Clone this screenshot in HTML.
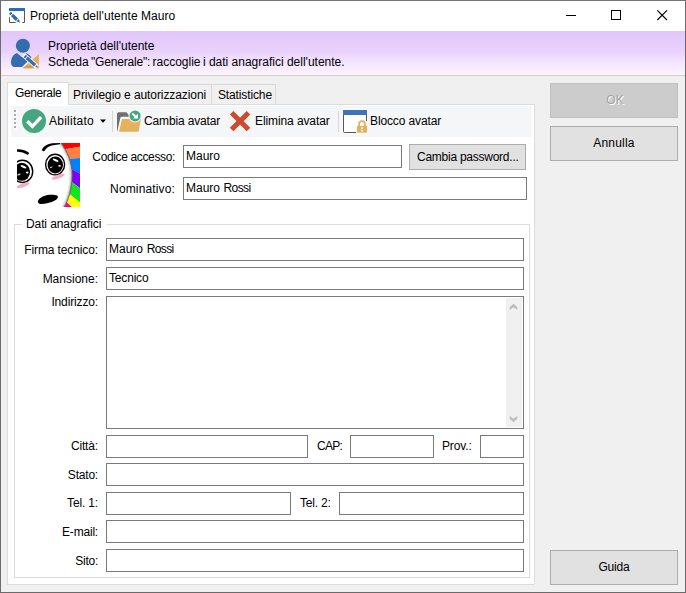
<!DOCTYPE html>
<html><head><meta charset="utf-8">
<style>
html,body{margin:0;padding:0;}
body{width:686px;height:593px;overflow:hidden;background:#f0f0f0;font-family:"Liberation Sans",sans-serif;font-size:12px;color:#000;position:relative;}
.a{position:absolute;}
.t{position:absolute;white-space:pre;line-height:16px;height:16px;}
.r{text-align:right;}
.in{position:absolute;box-sizing:border-box;border:1px solid #7a7a7a;background:#fff;height:23px;}
.btn{position:absolute;box-sizing:border-box;border:1px solid #adadad;background:#e1e1e1;text-align:center;}
</style></head><body>
<!-- window frame -->
<div class="a" style="left:0;top:0;width:686px;height:593px;box-sizing:border-box;border:1px solid #6b6b6b;border-top-color:#747474;"></div>
<!-- title bar -->
<div class="a" style="left:1px;top:1px;width:684px;height:30px;background:#fff;"></div>
<svg class="a" style="left:9px;top:8px" width="16" height="16" viewBox="0 0 16 16">
<rect x="0" y="0" width="16" height="3" fill="#2e6db4"/>
<path d="M0.500 9.300V14.500H6.700M13.300 14.500H15.500V3" fill="none" stroke="#585858" stroke-width="1"/>
<path d="M2 5.800L2.100 5.900" stroke="#2e6db4" stroke-width="3.200" stroke-linecap="round"/>
<path d="M0.800 8.200L4.400 4.600" stroke="#fff" stroke-width="0.900"/>
<path d="M3.300 7.100L7.900 11.700" stroke="#2e6db4" stroke-width="3.400"/>
<path d="M7.300 13.300L9.700 10.900L11.200 14.800Z" fill="#2e6db4"/>
</svg>
<div class="t" style="left:30px;top:8px;letter-spacing:0.06px;">Proprietà dell'utente Mauro</div>
<svg class="a" style="left:560px;top:5px" width="120" height="22" viewBox="0 0 120 22">
<path d="M6 10.5H16" stroke="#000" stroke-width="1"/>
<rect x="51.5" y="5.5" width="9" height="9" fill="none" stroke="#000" stroke-width="1"/>
<path d="M97.3 5.3L107 15M107 5.3L97.3 15" stroke="#000" stroke-width="1.1"/>
</svg>
<!-- banner -->
<div class="a" style="left:1px;top:31px;width:684px;height:44px;background:linear-gradient(#e2c6fc 0%,#e8d1fc 45%,#f5e6fd 75%,#fdf4fe 100%);"></div>
<div class="a" style="left:1px;top:75px;width:684px;height:1px;background:#cfcfc1;"></div>
<svg class="a" style="left:10px;top:38px" width="32" height="32" viewBox="0 0 32 32">
<circle cx="12.900" cy="7.700" r="7.050" fill="#336db0"/>
<path d="M6.800 15C3 16.500 1 20.500 1 24.500C1 27.500 2.500 28.900 4.500 28.900H12L21.500 19.500C20.500 17.500 18.500 16 16.500 15.200L12.500 19.600Z" fill="#336db0"/>
<path d="M12.200 30.500L28.900 15.900V30.500Z" fill="#e8ae5a"/>
<path d="M16 29.400V28.400M18 29.400V28.400M20 29.400V27.800M22 29.400V28.400M24 29.400V28.400" stroke="#8a6a3a" stroke-width="0.800"/>
<path d="M13.900 17.200L27.200 29.100" stroke="#fff" stroke-width="4.800"/>
<path d="M14.700 17.900L25.100 27.200" stroke="#336db0" stroke-width="3.300" stroke-dasharray="1.900 0.800 20 0"/>
<path d="M25.200 28.700L27.800 29.600L26.900 27Z" fill="#336db0"/>
</svg>
<div class="t" style="left:48px;top:38px;">Proprietà dell'utente</div>
<div class="t" style="left:48px;top:54px;"><span style="word-spacing:-1px">Scheda <span style="letter-spacing:-0.19px">"Generale":</span> raccoglie </span>i dati anagrafici dell'utente.</div>

<!-- tabs -->
<div class="a" style="left:68px;top:84px;width:208px;height:21px;box-sizing:border-box;border:1px solid #d9d9d9;border-bottom:none;background:#f0f0f0;"></div>
<div class="a" style="left:211px;top:85px;width:1px;height:19px;background:#d9d9d9;"></div>
<!-- tab panel -->
<div class="a" style="left:7px;top:104px;width:528px;height:481px;box-sizing:border-box;border:1px solid #dcdcdc;background:#fff;"></div>
<div class="a" style="left:7px;top:82px;width:62px;height:23px;box-sizing:border-box;border:1px solid #dcdcdc;border-bottom:none;background:#fff;"></div>
<div class="t" style="left:15px;top:85px;letter-spacing:-0.4px;">Generale</div>
<div class="t" style="left:73px;top:87px;letter-spacing:-0.085px;">Privilegio e autorizzazioni</div>
<div class="t" style="left:218px;top:87px;letter-spacing:-0.13px;">Statistiche</div>

<!-- toolbar -->
<div class="a" style="left:11px;top:106px;width:521px;height:31px;background:#f5f6f7;"></div>
<svg class="a" style="left:13px;top:108px" width="360" height="28" viewBox="0 0 360 28">
<g fill="#fff"><rect x="2" y="3" width="2" height="2"/><rect x="2" y="7" width="2" height="2"/><rect x="2" y="11" width="2" height="2"/><rect x="2" y="15" width="2" height="2"/><rect x="2" y="19" width="2" height="2"/></g>
<g fill="#a9a9a9"><rect x="1" y="2" width="2" height="2"/><rect x="1" y="6" width="2" height="2"/><rect x="1" y="10" width="2" height="2"/><rect x="1" y="14" width="2" height="2"/><rect x="1" y="18" width="2" height="2"/></g>
<circle cx="21" cy="13" r="12" fill="#47a680"/>
<path d="M14.300 13.300L19.400 18.300L28.100 9.200" fill="none" stroke="#fff" stroke-width="3.400"/>
<path d="M87 11.500H93L90 14.800Z" fill="#000"/>
<rect x="99" y="3" width="1" height="21" fill="#d6d6d6"/>
<!-- folder -->
<path d="M104 23.200V5.700Q104 4.200 105.500 4.200H113.500L116 7.500V8.800H108.800Q107.600 8.800 107.300 10L104.300 23.200Z" fill="#6f6f6f"/>
<path d="M109 11H127.900L125.600 23.700H106Z" fill="#e8b25d"/>
<circle cx="122.070" cy="7.950" r="6.500" fill="#f5f6f7"/>
<circle cx="122.070" cy="7.950" r="5.500" fill="#47a680"/>
<path d="M119.300 5.400L123.200 9.300" stroke="#fff" stroke-width="2"/>
<path d="M125 5.700V10.600H120.100Z" fill="#fff"/>
<!-- red x -->
<path d="M218.600 4.700L235.500 21.500M235.500 4.700L218.600 21.500" stroke="#cb4a30" stroke-width="5"/>
<rect x="325" y="3" width="1" height="21" fill="#d6d6d6"/>
<!-- window lock -->
<rect x="329" y="1" width="26" height="25" fill="#fbfbfc"/>
<rect x="330" y="2" width="24" height="5" fill="#3b76b5"/>
<rect x="331" y="7" width="22" height="17" fill="#fff"/>
<path d="M330.500 7V23.500Q330.500 24.500 331.500 24.500H343M353.500 7V13" fill="none" stroke="#555" stroke-width="1"/>
<rect x="343" y="16.900" width="11" height="8.800" fill="#fff"/>
<path d="M346.100 18V15.900A2.900 2.900 0 0 1 351.900 15.900V18" fill="none" stroke="#e8ae5a" stroke-width="1.750"/>
<rect x="344" y="17.900" width="10" height="6.800" fill="#e8ae5a"/>
<rect x="348" y="19.300" width="1.900" height="1.800" fill="#fff"/><rect x="348" y="22" width="1.900" height="1.400" fill="#fff"/>
</svg>
<div class="t" style="left:49px;top:113px;letter-spacing:0.25px;">Abilitato</div>
<div class="t" style="left:144px;top:113px;letter-spacing:-0.15px;">Cambia avatar</div>
<div class="t" style="left:255px;top:113px;letter-spacing:-0.1px;">Elimina avatar</div>
<div class="t" style="left:370px;top:113px;letter-spacing:-0.12px;">Blocco avatar</div>

<!-- avatar -->
<svg class="a" style="left:17px;top:143px" width="63" height="64" viewBox="0 0 63 64">
<rect width="63" height="64" fill="#fff"/>
<path d="M40 0H63V3.800L40 7.400Z" fill="#ff0000"/>
<path d="M40 7.400L63 3.800V14.900L40 16.700Z" fill="#ff8040"/>
<path d="M40 16.700L63 14.900V30.600L45 20.800Z" fill="#0080ff"/>
<path d="M45 20.800L63 30.600V45.200L45 31.600Z" fill="#8000ff"/>
<path d="M45 31.600L63 45.200V59.600L45 44.900Z" fill="#0fe61e"/>
<path d="M45 44.900L63 59.600V64H54.800L45 54.900Z" fill="#ffff00"/>
<path d="M45 54.900L54.800 64H45Z" fill="#ff00a0"/>
<path d="M43.200 -1C50.500 8 55.400 20 55.200 32.400C55 45 51.500 57 46.800 65H-2V-2Z" fill="#fff"/>
<path d="M41.400 -1C48.700 8 53.500 20 53.300 32.400C53.100 45 49.600 57 44.900 65" fill="none" stroke="#e4e4e4" stroke-width="1.800"/>
<path d="M42.500 -1C49.800 8 54.600 20 54.400 32.400C54.200 45 50.700 57 46 65" fill="none" stroke="#bcbcbc" stroke-width="1.200"/>
<path d="M43.200 -1C50.500 8 55.400 20 55.200 32.400C55 45 51.500 57 46.800 65" fill="none" stroke="#555" stroke-width="0.900"/>
<path d="M24.700 7.200C26.500 3 31 0.700 35.500 0.300L43 0V1.300L36 2.200C32 2.800 29 4.800 27 8.600Z" fill="#000"/>
<path d="M0 7.600C4 7.400 8 8.600 10.600 10.400" fill="none" stroke="#000" stroke-width="2.500" stroke-linecap="round"/>
<ellipse cx="38.100" cy="21.600" rx="9.500" ry="10.300" fill="#fff" stroke="#000" stroke-width="1.400"/>
<ellipse cx="38.300" cy="22" rx="7.700" ry="8.500" fill="#000"/>
<ellipse cx="38.600" cy="17.300" rx="3.200" ry="1.100" fill="#fff" transform="rotate(24 38.6 17.3)"/>
<ellipse cx="42.600" cy="22.800" rx="1.300" ry="0.900" fill="#fff"/>
<ellipse cx="34.200" cy="24.300" rx="1.500" ry="0.600" fill="#ccc" transform="rotate(-25 34.2 24.3)"/>
<ellipse cx="5.400" cy="28.400" rx="10.300" ry="11.100" fill="#fff" stroke="#000" stroke-width="1.400"/>
<ellipse cx="4.800" cy="28.800" rx="8.300" ry="9" fill="#000"/>
<ellipse cx="6.500" cy="23.800" rx="3.200" ry="1.100" fill="#fff" transform="rotate(24 6.5 23.8)"/>
<ellipse cx="10.200" cy="29.500" rx="1.300" ry="0.900" fill="#fff"/>
<ellipse cx="2" cy="31.500" rx="1.800" ry="0.700" fill="#ccc" transform="rotate(-25 2 31.5)"/>
<ellipse cx="41.200" cy="33.700" rx="6.800" ry="1.900" fill="#f9a9c2" transform="rotate(-20 41.2 33.7)"/>
<ellipse cx="6.200" cy="42.200" rx="6.800" ry="1.900" fill="#f9a9c2" transform="rotate(-20 6.2 42.2)"/>
<path d="M20.800 58.500C21.500 55.500 26 52.800 30.300 52C34 51.400 38.500 51.600 40 52.500C41.500 53.500 41 55 39.500 56.500C37 58.500 33 59.800 29 60.500C25 61.300 21 61.500 20.800 58.500Z" fill="#000"/>
</svg>

<div class="t r" style="left:75px;width:100px;top:149px;letter-spacing:-0.36px;">Codice accesso:</div>
<div class="in" style="left:183px;top:145px;width:219px;"></div>
<div class="t" style="left:186px;top:148px;">Mauro</div>
<div class="btn" style="left:409px;top:144px;width:117px;height:26px;"></div>
<div class="t" style="left:417px;top:149px;letter-spacing:-0.25px;">Cambia password...</div>
<div class="t r" style="left:75px;width:100px;top:181px;letter-spacing:0.14px;">Nominativo:</div>
<div class="in" style="left:183px;top:177px;width:344px;"></div>
<div class="t" style="left:186px;top:180px;word-spacing:0.2px;">Mauro <span style="letter-spacing:-0.62px">Rossi</span></div>

<!-- group box -->
<div class="a" style="left:14px;top:224px;width:516px;height:354px;box-sizing:border-box;border:1px solid #dcdcdc;"></div>
<div class="a" style="left:22px;top:220px;width:85px;height:10px;background:#fff;"></div>
<div class="t" style="left:26px;top:216px;letter-spacing:-0.1px;">Dati anagrafici</div>

<div class="t r" style="left:0px;width:98px;top:242px;letter-spacing:-0.12px;">Firma tecnico:</div>
<div class="in" style="left:106px;top:238px;width:418px;"></div>
<div class="t" style="left:109px;top:241px;word-spacing:0.4px;">Mauro <span style="letter-spacing:-0.62px">Rossi</span></div>
<div class="t r" style="left:0px;width:98px;top:271px;">Mansione:</div>
<div class="in" style="left:106px;top:267px;width:418px;"></div>
<div class="t" style="left:109px;top:270px;letter-spacing:-0.18px;">Tecnico</div>
<div class="t r" style="left:0px;width:98px;top:294px;letter-spacing:-0.14px;">Indirizzo:</div>
<div class="in" style="left:106px;top:296px;width:418px;height:133px;"></div>
<div class="a" style="left:506px;top:298px;width:16px;height:129px;background:#f0f0f0;"></div>
<svg class="a" style="left:506px;top:298px" width="16" height="129" viewBox="0 0 16 129">
<path d="M7.500 5.800L11.300 9.300V12.100L7.500 9.300L3.700 12.100V9.300Z" fill="#bdbdbd"/>
<path d="M7.500 124.200L11.300 120.700V117.900L7.500 120.700L3.700 117.900V120.700Z" fill="#bdbdbd"/>
</svg>

<div class="t r" style="left:0px;width:98px;top:438px;letter-spacing:-0.15px;">Città:</div>
<div class="in" style="left:106px;top:435px;width:202px;"></div>
<div class="t" style="left:317px;top:438px;letter-spacing:-0.7px;">CAP:</div>
<div class="in" style="left:350px;top:435px;width:84px;"></div>
<div class="t" style="left:442px;top:438px;letter-spacing:-0.13px;">Prov.:</div>
<div class="in" style="left:480px;top:435px;width:44px;"></div>

<div class="t r" style="left:0px;width:98px;top:467px;letter-spacing:-0.2px;">Stato:</div>
<div class="in" style="left:106px;top:463px;width:418px;"></div>

<div class="t r" style="left:0px;width:98px;top:495px;letter-spacing:-0.15px;">Tel. 1:</div>
<div class="in" style="left:106px;top:492px;width:185px;"></div>
<div class="t" style="left:300px;top:495px;letter-spacing:-0.2px;">Tel. 2:</div>
<div class="in" style="left:339px;top:492px;width:185px;"></div>

<div class="t r" style="left:0px;width:98px;top:524px;letter-spacing:-0.2px;">E-mail:</div>
<div class="in" style="left:106px;top:520px;width:418px;"></div>
<div class="t r" style="left:0px;width:98px;top:553px;letter-spacing:-0.25px;">Sito:</div>
<div class="in" style="left:106px;top:549px;width:418px;"></div>

<!-- right buttons -->
<div class="btn" style="left:550px;top:83px;width:128px;height:35px;background:#cccccc;border-color:#bfbfbf;"></div>
<div class="t" style="left:550px;width:128px;top:92px;text-align:center;color:#a3a3a3;text-shadow:1px 1px 0 #fff;padding-left:1px;">OK</div>
<div class="btn" style="left:550px;top:126px;width:128px;height:35px;"></div>
<div class="t" style="left:550px;width:128px;top:135px;text-align:center;letter-spacing:0.2px;">Annulla</div>
<div class="btn" style="left:550px;top:550px;width:128px;height:35px;"></div>
<div class="t" style="left:550px;width:128px;top:559px;text-align:center;letter-spacing:-0.2px;">Guida</div>
</body></html>
